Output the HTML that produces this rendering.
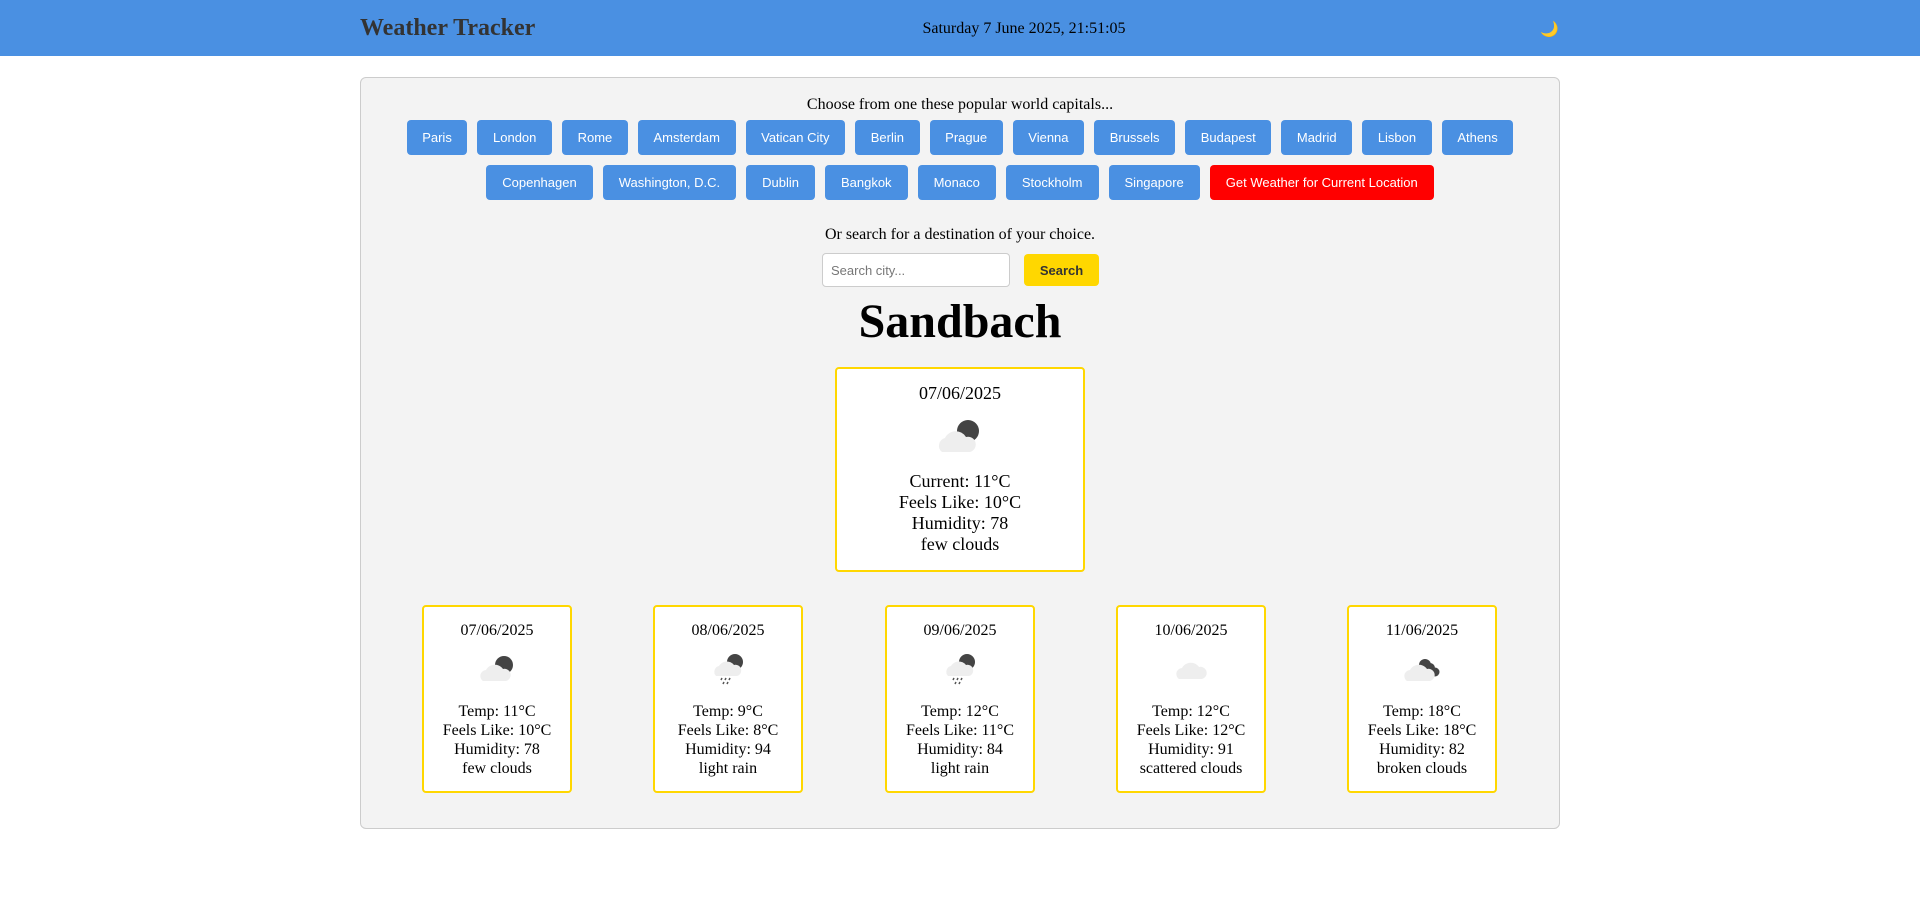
<!DOCTYPE html>
<html><head><meta charset="utf-8">
<style>
*{box-sizing:border-box}
body{margin:0;width:1920px;height:911px;background:#fff;font-family:"Liberation Serif",serif;position:relative;overflow:hidden}
.hdr{position:absolute;left:0;top:0;width:1920px;height:56px;background:#4A90E2}
.title{position:absolute;left:360px;top:15px;font-size:24px;font-weight:bold;color:#333}
.date{position:absolute;left:0;width:1920px;text-align:center;top:20px;font-size:16px;color:#000;padding-left:128px}
.moon{position:absolute;left:1540px;top:20px;font-size:15px}
.box{position:absolute;left:360px;top:77px;width:1200px;height:752px;background:#f3f3f3;border:1px solid #ccc;border-radius:6px}
.t{position:absolute;left:0;width:100%;text-align:center;font-size:16px}
.row{position:absolute;left:0;width:100%;display:flex;justify-content:center;gap:10px}
.b{height:35px;padding:0 15.6px;background:#4A90E2;color:#fff;font:13px "Liberation Sans",sans-serif;border-radius:4px;display:flex;align-items:center}
.r2 .b{padding:0 16px}
.red{background:#f00}
.inp{position:absolute;left:461px;top:175px;width:188px;height:34px;background:#fff;border:1px solid #ccc;border-radius:4px;font:13px "Liberation Sans",sans-serif;color:#777;padding:9px 8px}
.sb{position:absolute;left:663px;top:176px;width:75px;height:32px;background:#FFD700;border-radius:4px;font:bold 13px "Liberation Sans",sans-serif;color:#333;display:flex;align-items:center;justify-content:center}
h1{position:absolute;left:0;width:100%;text-align:center;top:216px;margin:0;font-size:48px;font-weight:bold;line-height:56px}
.card{position:absolute;background:#fff;border:2px solid #FFD700;border-radius:4px;text-align:center}
.main{left:474px;top:289px;width:250px;height:205px;font-size:18px;line-height:21px}
.fc{top:527px;width:150px;height:188px;font-size:16px;line-height:19px}
svg{display:block;margin:0 auto}
</style></head><body>
<div class="hdr"><div class="title">Weather Tracker</div><div class="date">Saturday 7 June 2025, 21:51:05</div><div class="moon">🌙</div></div>
<div class="box">
<div class="t" style="top:18px">Choose from one these popular world capitals...</div>
<div class="row" style="top:42px"><span class="b">Paris</span><span class="b">London</span><span class="b">Rome</span><span class="b">Amsterdam</span><span class="b">Vatican City</span><span class="b">Berlin</span><span class="b">Prague</span><span class="b">Vienna</span><span class="b">Brussels</span><span class="b">Budapest</span><span class="b">Madrid</span><span class="b">Lisbon</span><span class="b">Athens</span></div>
<div class="row r2" style="top:87px"><span class="b">Copenhagen</span><span class="b">Washington, D.C.</span><span class="b">Dublin</span><span class="b">Bangkok</span><span class="b">Monaco</span><span class="b">Stockholm</span><span class="b">Singapore</span><span class="b red">Get Weather for Current Location</span></div>
<div class="t" style="top:148px">Or search for a destination of your choice.</div>
<div class="inp">Search city...</div><div class="sb">Search</div>
<h1>Sandbach</h1>
<div class="card main"><div style="margin-top:14px">07/06/2025</div>
<svg width="60" height="50" viewBox="0 0 60 50" style="margin-top:6px"><circle cx="38" cy="21" r="11" fill="#444"/><path d="M12 42 a8 8 0 0 1 3-14 a12 12 0 0 1 21-1 a7.5 7.5 0 0 1 4 15z" fill="#eee"/></svg>
<div style="margin-top:11px">Current: 11°C<br>Feels Like: 10°C<br>Humidity: 78<br>few clouds</div></div>
<div class="card fc" style="left:61px"><div style="margin-top:14px">07/06/2025</div><svg width="50" height="44" viewBox="0 0 50 44" style="margin-top:6px"><circle cx="32" cy="19" r="9" fill="#444"/><path d="M11 35 a6 6 0 0 1 3-11 a10 10 0 0 1 17-1 a6 6 0 0 1 3 12z" fill="#eee"/></svg><div style="margin-top:12px">Temp: 11°C<br>Feels Like: 10°C<br>Humidity: 78<br>few clouds</div></div>
<div class="card fc" style="left:292px"><div style="margin-top:14px">08/06/2025</div><svg width="50" height="44" viewBox="0 0 50 44" style="margin-top:6px"><circle cx="32" cy="16" r="8" fill="#444"/><path d="M13 30 a6 6 0 0 1 3-10 a9 9 0 0 1 15-1 a5 5 0 0 1 3 11z" fill="#eee"/><g stroke="#555" stroke-width="1.5"><path d="M19 32l-1 2M23 32l-1 2M27 32l-1 2M21 36l-1 2M25 36l-1 2"/></g></svg><div style="margin-top:12px">Temp: 9°C<br>Feels Like: 8°C<br>Humidity: 94<br>light rain</div></div>
<div class="card fc" style="left:524px"><div style="margin-top:14px">09/06/2025</div><svg width="50" height="44" viewBox="0 0 50 44" style="margin-top:6px"><circle cx="32" cy="16" r="8" fill="#444"/><path d="M13 30 a6 6 0 0 1 3-10 a9 9 0 0 1 15-1 a5 5 0 0 1 3 11z" fill="#eee"/><g stroke="#555" stroke-width="1.5"><path d="M19 32l-1 2M23 32l-1 2M27 32l-1 2M21 36l-1 2M25 36l-1 2"/></g></svg><div style="margin-top:12px">Temp: 12°C<br>Feels Like: 11°C<br>Humidity: 84<br>light rain</div></div>
<div class="card fc" style="left:755px"><div style="margin-top:14px">10/06/2025</div><svg width="50" height="44" viewBox="0 0 50 44" style="margin-top:6px"><path d="M13 33 a6 6 0 0 1 3-11 a10 10 0 0 1 17-1 a6 6 0 0 1 3 12z" fill="#eee"/></svg><div style="margin-top:12px">Temp: 12°C<br>Feels Like: 12°C<br>Humidity: 91<br>scattered clouds</div></div>
<div class="card fc" style="left:986px"><div style="margin-top:14px">11/06/2025</div><svg width="50" height="44" viewBox="0 0 50 44" style="margin-top:6px"><g fill="#444"><circle cx="28" cy="19" r="6"/><circle cx="33" cy="22" r="5"/><circle cx="38" cy="26" r="4.5"/></g><path d="M10 35 a6 6 0 0 1 3-11 a10 10 0 0 1 17-1 a6 6 0 0 1 3 12z" fill="#eee"/></svg><div style="margin-top:12px">Temp: 18°C<br>Feels Like: 18°C<br>Humidity: 82<br>broken clouds</div></div>
</div>
</body></html>
